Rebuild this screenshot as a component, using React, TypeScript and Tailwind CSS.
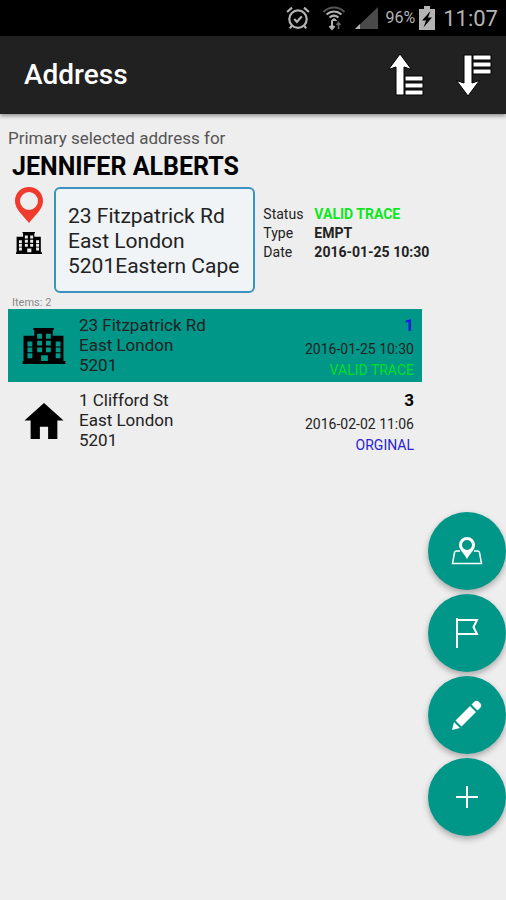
import type { ReactNode } from 'react';

type AddressItem = {
    id: number;
    icon: ReactNode;
    lines: string[];
    count: number;
    date: string;
    status: string;
    selected: boolean;
    countClass: string;
    statusClass: string;
};

function BuildingIcon({ className }: { className: string }) {
    return (
        <svg viewBox="0 0 44 37" className={className} fill="currentColor" aria-hidden="true">
            <path
                fillRule="evenodd"
                d="M12 0h20v2h-1v6h11v26h2v3H0v-3h1V8h11V2h-1V0zM15 6v5h5V6zM24 6v5h5V6zM15 13v5h5v-5zM24 13v5h5v-5zM15 20v5h5v-5zM24 20v5h5v-5zM5 14v5h5v-5zM5 20v5h5v-5zM5 26v5h5v-5zM34 14v5h5v-5zM34 20v5h5v-5zM34 26v5h5v-5zM19 28v6h7v-6z"
            />
        </svg>
    );
}

function HomeIcon() {
    return (
        <svg viewBox="0 0 38 35" className="h-9 w-10" fill="currentColor" aria-hidden="true">
            <path d="M19 0 38 17h-6v18h-9V23h-8v12H6V17H0z" />
        </svg>
    );
}

function PinIcon() {
    return (
        <svg viewBox="0 0 28 36" className="h-9 w-7" aria-hidden="true">
            <path
                fill="#f03a2e"
                fillRule="evenodd"
                d="M14 0C6 0 0 6 0 14c0 9 9 15 14 22 5-7 14-13 14-22C28 6 22 0 14 0zM14 5a9 9 0 1 1 0 18 9 9 0 0 1 0-18z"
            />
        </svg>
    );
}

const items: AddressItem[] = [
    {
        id: 1,
        icon: <BuildingIcon className="h-9 w-11" />,
        lines: ['23 Fitzpatrick Rd', 'East London', '5201'],
        count: 1,
        date: '2016-01-25 10:30',
        status: 'VALID TRACE',
        selected: true,
        countClass: 'text-[#1a1ae0]',
        statusClass: 'text-[#00e022]',
    },
    {
        id: 2,
        icon: <HomeIcon />,
        lines: ['1 Clifford St', 'East London', '5201'],
        count: 3,
        date: '2016-02-02 11:06',
        status: 'ORGINAL',
        selected: false,
        countClass: 'text-black',
        statusClass: 'text-[#2a22d0]',
    },
];

const actions = [
    {
        label: 'Show on map',
        icon: (
            <svg viewBox="0 0 32 32" className="size-8" fill="none" stroke="white" strokeWidth="1.5">
                <path d="M9 16H5.500Q4 16 3.500 17.500L1.500 28.500h29L28.500 17.500Q28 16 26.500 16H23" />
                <path
                    fill="white"
                    stroke="none"
                    fillRule="evenodd"
                    d="M16 2a8 8 0 0 0-8 8c0 5 5 8 8 14 3-6 8-9 8-14a8 8 0 0 0-8-8zm0 3a5 5 0 1 1 0 10 5 5 0 0 1 0-10z"
                />
            </svg>
        ),
    },
    {
        label: 'Flag address',
        icon: (
            <svg viewBox="0 0 32 32" className="size-8" fill="none" stroke="white" strokeWidth="2">
                <path d="M6 1v30M6 3h20l-3.500 7 3.500 7H6" />
            </svg>
        ),
    },
    {
        label: 'Edit address',
        icon: (
            <svg viewBox="0 0 32 32" className="size-8" fill="white">
                <path d="M1 31l2-8 6 6zM4.500 21.500 19 7l6 6-14.500 14.500zM20.500 5.500 23.500 2.500c1-1 3-1 4 0l2 2c1 1 1 3 0 4l-3 3z" />
            </svg>
        ),
    },
    {
        label: 'Add address',
        icon: (
            <svg viewBox="0 0 32 32" className="size-8" stroke="white" strokeWidth="2">
                <path d="M16 5v22M5 16h22" />
            </svg>
        ),
    },
];

function StatusBar() {
    return (
        <div className="flex h-9 items-center justify-end bg-black pr-2 text-[#b4b4b4]">
            <svg viewBox="0 0 22 22" className="mr-3 size-6" fill="none" stroke="currentColor" strokeWidth="2" aria-hidden="true">
                <circle cx="11" cy="12" r="8" />
                <path d="m7.500 12 2.500 2.500 4.500-5M1 5.500 5.500 1.500M21 5.500l-4.500-4M5.500 18 3.500 20.500M16.500 18l2 2.500" />
            </svg>
            <svg viewBox="0 0 24 26" className="mr-2 h-7 w-6" fill="none" stroke="currentColor" aria-hidden="true">
                <path d="M1.500 7c6-6 15-6 21 0" strokeWidth="2" stroke="#555" />
                <path d="M4.500 9.500c4.500-4 10.500-4 15 0M7.500 12.500c3-2.500 6-2.500 9 0" strokeWidth="2" />
                <path d="M12 13.500l2.500 2H9.500z" fill="currentColor" />
                <path d="M10 16v7M7.500 21l2.500 3 2.500-3" strokeWidth="2" />
                <path d="M16.500 24v-6M14.500 20l2-2.500 2 2.500" strokeWidth="1.500" stroke="#666" />
            </svg>
            <svg viewBox="0 0 24 24" className="mr-2 size-6" aria-hidden="true">
                <path d="M24 1v22H1z" fill="#4a4a4a" />
                <path d="M6 18v5H1z" fill="currentColor" />
            </svg>
            <span className="text-base">96%</span>
            <svg viewBox="0 0 16 24" className="mx-1 h-6 w-4" aria-hidden="true">
                <path d="M5 0h6v3h5v21H0V3h5z" fill="currentColor" />
                <path d="M11.500 5 3 14.500h4L4.500 21.500l8.500-10H9z" fill="black" />
            </svg>
            <span className="ml-1 text-[22px]">11:07</span>
        </div>
    );
}

function AppBar() {
    return (
        <header className="relative flex h-[78px] items-center bg-[#212121] pr-[14px] pl-6 shadow-[0_2px_4px_rgba(0,0,0,0.4)]">
            <h1 className="flex-1 text-[28px] font-medium text-white">Address</h1>
            <button type="button" aria-label="Sort ascending" className="mr-8">
                <svg viewBox="0 0 36 44" className="h-11 w-9" fill="white" stroke="black" strokeWidth="1" aria-hidden="true">
                    <path d="M12 1 23.500 16.500 16 14v28H8V14L.5 16.500z" />
                    <path d="M17 23h18v5H17zM17 30h18v5H17zM17 37h18v5H17z" />
                </svg>
            </button>
            <button type="button" aria-label="Sort descending">
                <svg viewBox="0 0 36 44" className="h-11 w-9" fill="white" stroke="black" strokeWidth="1" aria-hidden="true">
                    <path d="M12 43 23.500 27.500 16 30V2H8v28L.5 27.500z" />
                    <path d="M17 2h18v5H17zM17 9h18v5H17zM17 16h18v5H17z" />
                </svg>
            </button>
        </header>
    );
}

export default function App() {
    return (
        <div className="min-h-screen bg-[#eeeeee] font-[Roboto,sans-serif] text-[#222222]">
            <StatusBar />
            <AppBar />

            <main className="px-2 pt-3">
                <p className="text-[17px] leading-6 text-[#555555]">Primary selected address for</p>
                <h2 className="pt-px pl-1 text-[25px] leading-8 font-bold text-black">JENNIFER ALBERTS</h2>

                {/* Selected address */}
                <section className="mt-1 flex">
                    <div className="flex w-[46px] shrink-0 flex-col items-center gap-2 pr-1">
                        <PinIcon />
                        <BuildingIcon className="h-6 w-[26px] text-black" />
                    </div>
                    <address className="shrink-0 rounded-md border-2 border-[#3b93bf] bg-[#f0f4f6] pt-[15px] pr-[14px] pb-3 pl-3 text-[21px] leading-[25px] not-italic">
                        23 Fitzpatrick Rd
                        <br />
                        East London
                        <br />
                        5201Eastern Cape
                    </address>
                    <dl className="ml-2 grid grid-cols-[51px_auto] content-start pt-[18px] text-sm leading-[19px]">
                        <dt>Status</dt>
                        <dd className="font-bold text-[#0be81b]">VALID TRACE</dd>
                        <dt>Type</dt>
                        <dd className="font-bold">EMPT</dd>
                        <dt>Date</dt>
                        <dd className="font-bold">2016-01-25 10:30</dd>
                    </dl>
                </section>

                <p className="pt-1 pl-1 text-[11px] leading-3 text-[#888888]">Items: 2</p>

                {/* Address list */}
                <ul className="mr-[76px] flex flex-col gap-0.5">
                    {items.map((item) => (
                        <li
                            key={item.id}
                            className={`flex items-start pr-2 ${item.selected ? 'bg-[#009688]' : ''}`}
                        >
                            <div className="flex w-[71px] shrink-0 items-center justify-center self-center text-black">
                                {item.icon}
                            </div>
                            <div className="flex-1 pt-[6px] text-[17px] leading-5">
                                {item.lines.map((line) => (
                                    <p key={line}>{line}</p>
                                ))}
                            </div>
                            <div className="pt-[6px] pb-px text-right text-sm leading-[21px]">
                                <p className={`text-[17px] leading-5 font-bold ${item.countClass}`}>{item.count}</p>
                                <p className="pt-1">{item.date}</p>
                                <p className={item.statusClass}>{item.status}</p>
                            </div>
                        </li>
                    ))}
                </ul>
            </main>

            {/* Floating actions */}
            <nav className="fixed right-0 bottom-16 flex flex-col gap-1">
                {actions.map((action) => (
                    <button
                        key={action.label}
                        type="button"
                        aria-label={action.label}
                        className="flex size-[78px] items-center justify-center rounded-full bg-[#009688] shadow-[0_3px_6px_rgba(0,0,0,0.3)]"
                    >
                        {action.icon}
                    </button>
                ))}
            </nav>
        </div>
    );
}
